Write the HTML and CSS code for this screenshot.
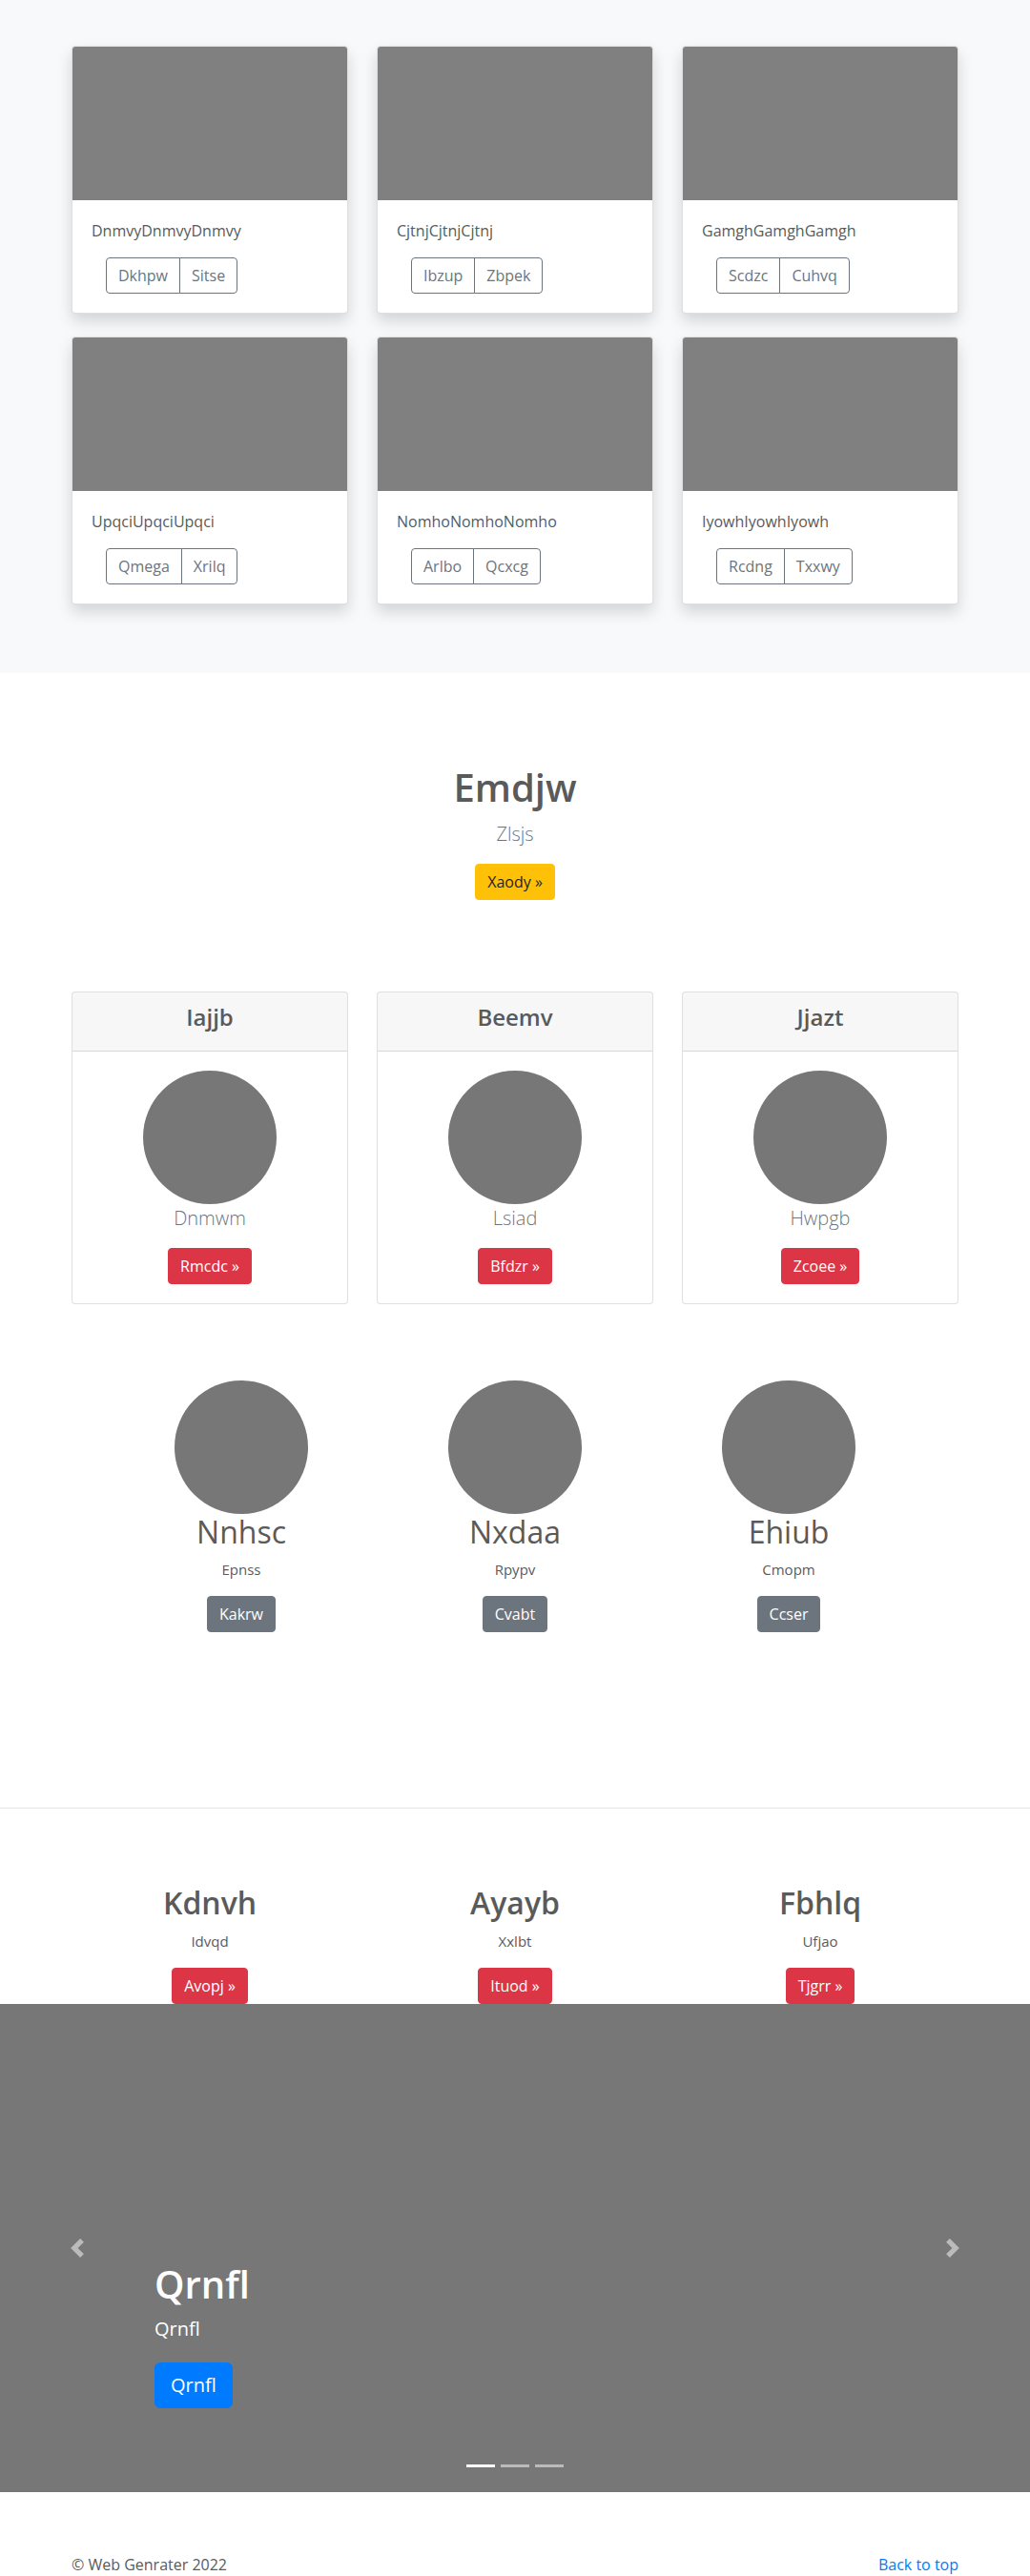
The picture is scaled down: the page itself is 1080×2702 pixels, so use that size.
FILE: index.html
```html
<!DOCTYPE html>
<html lang="en">
<head>
<meta charset="utf-8">
<title>Web Genrater</title>
<link rel="stylesheet" href="styles.css">
</head>
<body>
<section class="album">
  <div class="container">
    <div class="grid3 album-grid">
      <div class="acard">
        <div class="acard-img"></div>
        <div class="acard-body">
          <p class="acard-text">DnmvyDnmvyDnmvy</p>
          <div class="btn-group"><a class="btn btn-outline" href="#">Dkhpw</a><a class="btn btn-outline" href="#">Sitse</a></div>
        </div>
      </div>
      <div class="acard">
        <div class="acard-img"></div>
        <div class="acard-body">
          <p class="acard-text">CjtnjCjtnjCjtnj</p>
          <div class="btn-group"><a class="btn btn-outline" href="#">Ibzup</a><a class="btn btn-outline" href="#">Zbpek</a></div>
        </div>
      </div>
      <div class="acard">
        <div class="acard-img"></div>
        <div class="acard-body">
          <p class="acard-text">GamghGamghGamgh</p>
          <div class="btn-group"><a class="btn btn-outline" href="#">Scdzc</a><a class="btn btn-outline" href="#">Cuhvq</a></div>
        </div>
      </div>
      <div class="acard">
        <div class="acard-img"></div>
        <div class="acard-body">
          <p class="acard-text">UpqciUpqciUpqci</p>
          <div class="btn-group"><a class="btn btn-outline" href="#">Qmega</a><a class="btn btn-outline" href="#">Xrilq</a></div>
        </div>
      </div>
      <div class="acard">
        <div class="acard-img"></div>
        <div class="acard-body">
          <p class="acard-text">NomhoNomhoNomho</p>
          <div class="btn-group"><a class="btn btn-outline" href="#">Arlbo</a><a class="btn btn-outline" href="#">Qcxcg</a></div>
        </div>
      </div>
      <div class="acard">
        <div class="acard-img"></div>
        <div class="acard-body">
          <p class="acard-text">IyowhIyowhIyowh</p>
          <div class="btn-group"><a class="btn btn-outline" href="#">Rcdng</a><a class="btn btn-outline" href="#">Txxwy</a></div>
        </div>
      </div>
    </div>
  </div>
</section>

<section class="jumbo">
  <h1 class="jumbo-title">Emdjw</h1>
  <p class="lead muted jumbo-lead">Zlsjs</p>
  <div class="actions"><a class="btn btn-warning" href="#">Xaody »</a></div>
</section>

<section class="container pricing">
  <div class="grid3">
    <div class="pcard">
      <div class="pcard-header"><h4 class="pcard-title">Iajjb</h4></div>
      <div class="pcard-body">
        <div class="circle"></div>
        <p class="lead muted pcard-lead">Dnmwm</p>
        <a class="btn btn-danger" href="#">Rmcdc »</a>
      </div>
    </div>
    <div class="pcard">
      <div class="pcard-header"><h4 class="pcard-title">Beemv</h4></div>
      <div class="pcard-body">
        <div class="circle"></div>
        <p class="lead muted pcard-lead">Lsiad</p>
        <a class="btn btn-danger" href="#">Bfdzr »</a>
      </div>
    </div>
    <div class="pcard">
      <div class="pcard-header"><h4 class="pcard-title">Jjazt</h4></div>
      <div class="pcard-body">
        <div class="circle"></div>
        <p class="lead muted pcard-lead">Hwpgb</p>
        <a class="btn btn-danger" href="#">Zcoee »</a>
      </div>
    </div>
  </div>
</section>

<section class="team">
  <div class="member">
    <div class="circle"></div>
    <h2 class="member-name">Nnhsc</h2>
    <p class="small-text">Epnss</p>
    <a class="btn btn-secondary" href="#">Kakrw</a>
  </div>
  <div class="member">
    <div class="circle"></div>
    <h2 class="member-name">Nxdaa</h2>
    <p class="small-text">Rpypv</p>
    <a class="btn btn-secondary" href="#">Cvabt</a>
  </div>
  <div class="member">
    <div class="circle"></div>
    <h2 class="member-name">Ehiub</h2>
    <p class="small-text">Cmopm</p>
    <a class="btn btn-secondary" href="#">Ccser</a>
  </div>
</section>

<hr class="divider">

<section class="container features">
  <div class="grid3">
    <div class="feature">
      <h2 class="feature-title">Kdnvh</h2>
      <p class="small-text">Idvqd</p>
      <a class="btn btn-danger" href="#">Avopj »</a>
    </div>
    <div class="feature">
      <h2 class="feature-title">Ayayb</h2>
      <p class="small-text">Xxlbt</p>
      <a class="btn btn-danger" href="#">Ituod »</a>
    </div>
    <div class="feature">
      <h2 class="feature-title">Fbhlq</h2>
      <p class="small-text">Ufjao</p>
      <a class="btn btn-danger" href="#">Tjgrr »</a>
    </div>
  </div>
</section>

<div class="carousel">
  <ol class="indicators">
    <li class="active"></li>
    <li></li>
    <li></li>
  </ol>
  <div class="carousel-caption">
    <h1 class="caption-title">Qrnfl</h1>
    <p class="caption-text">Qrnfl</p>
    <div class="caption-actions"><a class="btn btn-lg btn-primary" href="#">Qrnfl</a></div>
  </div>
  <a class="control control-prev" href="#">
    <svg width="20" height="20" viewBox="0 0 8 8" fill="#fff"><path d="M5.25 0l-4 4 4 4 1.5-1.5L4.25 4l2.5-2.5L5.25 0z"/></svg>
  </a>
  <a class="control control-next" href="#">
    <svg width="20" height="20" viewBox="0 0 8 8" fill="#fff"><path d="M2.75 0l-1.5 1.5L3.75 4l-2.5 2.5L2.75 8l4-4-4-4z"/></svg>
  </a>
</div>

<footer class="container footer">
  <p>© Web Genrater 2022</p>
  <p><a class="top-link" href="#">Back to top</a></p>
</footer>
</body>
</html>
```

FILE: styles.css
```css
* { box-sizing: border-box; }
html, body { margin: 0; padding: 0; }
body {
  font-family: "Open Sans", "Noto Sans", "Liberation Sans", sans-serif;
  font-size: 16px;
  line-height: 1.5;
  color: #5a5a5a;
  background: #fff;
}
h1, h2, h4, p { margin: 0; }

.container { width: 960px; margin: 0 auto; padding: 0 15px; }
.grid3 { display: grid; grid-template-columns: repeat(3, 1fr); column-gap: 30px; }

/* buttons */
.btn {
  display: inline-block;
  padding: 6px 12px;
  font-size: 16px;
  line-height: 24px;
  border: 1px solid transparent;
  border-radius: 4px;
  text-decoration: none;
  font-weight: 400;
  white-space: nowrap;
}
.btn-outline { color: #6c757d; border-color: #6c757d; background: transparent; }
.btn-warning { background: #ffc107; border-color: #ffc107; color: #212529; }
.btn-danger { background: #dc3545; border-color: #dc3545; color: #fff; }
.btn-secondary { background: #6c757d; border-color: #6c757d; color: #fff; }
.btn-primary { background: #007bff; border-color: #007bff; color: #fff; }
.btn-lg { padding: 8px 16px; font-size: 20px; line-height: 30px; border-radius: 6px; }

.btn-group { display: inline-flex; margin-left: 15px; }
.btn-group .btn:first-child { border-top-right-radius: 0; border-bottom-right-radius: 0; }
.btn-group .btn + .btn { margin-left: -1px; border-top-left-radius: 0; border-bottom-left-radius: 0; }

.lead { font-size: 20px; line-height: 30px; font-weight: 300; }
.muted { color: #6c757d; }

/* album */
.album { background: #f8f9fa; padding: 48px 0 72px; }
.album-grid { row-gap: 24px; }
.acard {
  background: #fff;
  border: 1px solid rgba(0, 0, 0, .125);
  border-radius: 4px;
  box-shadow: 0 .5rem 1rem rgba(0, 0, 0, .15);
  overflow: hidden;
}
.acard-img { height: 161px; background: #808080; }
.acard-body { padding: 20px; }
.acard-text { margin-bottom: 16px; }

/* jumbotron */
.jumbo { text-align: center; padding: 96px 0 48px; }
.jumbo-title { font-size: 40px; line-height: 48px; font-weight: 600; margin-bottom: 10px; }
.jumbo-lead { margin-bottom: 16px; }
.actions { display: flex; justify-content: center; }

/* pricing */
.pricing { padding-top: 48px; }
.pcard {
  border: 1px solid rgba(0, 0, 0, .125);
  border-radius: 4px;
  text-align: center;
  background: #fff;
  overflow: hidden;
}
.pcard-header {
  background: rgba(0, 0, 0, .03);
  border-bottom: 1px solid rgba(0, 0, 0, .125);
  padding: 12px 20px;
}
.pcard-title { font-size: 24px; line-height: 28.8px; font-weight: 600; margin-bottom: 8px; }
.pcard-body { padding: 20px; display: flex; flex-direction: column; align-items: center; }
.circle { width: 140px; height: 140px; border-radius: 50%; background: #777; flex: none; }
.pcard-lead { margin-bottom: 16px; }

/* team */
.team {
  width: 861px;
  margin: 80px auto 0;
  display: grid;
  grid-template-columns: repeat(3, 1fr);
}
.member { display: flex; flex-direction: column; align-items: center; text-align: center; }
.member-name { font-size: 32px; line-height: 38.4px; font-weight: 400; margin-bottom: 8px; }
.small-text { font-size: 15px; line-height: 24px; margin-bottom: 16px; }

.divider { border: 0; border-top: 1px solid #e5e5e5; margin: 184px 0 80px; height: 0; }

/* features */
.feature { display: flex; flex-direction: column; align-items: center; text-align: center; }
.feature-title { font-size: 32px; line-height: 38.4px; font-weight: 600; margin-bottom: 8px; }

/* carousel */
.carousel { position: relative; height: 512px; background: #777; overflow: hidden; }
.carousel-caption {
  position: absolute;
  left: 15%;
  right: 15%;
  bottom: 48px;
  padding: 20px 0;
  color: #fff;
  z-index: 10;
}
.caption-title { font-size: 40px; line-height: 48px; font-weight: 600; margin-bottom: 8px; }
.caption-text { font-size: 20px; line-height: 30px; margin-bottom: 20px; }
.caption-actions { display: flex; margin-bottom: 20px; }

.control {
  position: absolute;
  top: 0;
  bottom: 0;
  width: 15%;
  display: flex;
  align-items: center;
  justify-content: center;
  opacity: .5;
}
.control-prev { left: 0; }
.control-next { right: 0; }

.indicators {
  position: absolute;
  left: 15%;
  right: 15%;
  bottom: 0;
  margin: 0 0 16px;
  padding: 0;
  list-style: none;
  display: flex;
  justify-content: center;
  z-index: 15;
}
.indicators li {
  box-sizing: content-box;
  width: 30px;
  height: 3px;
  margin: 0 3px;
  background: #fff;
  background-clip: padding-box;
  border-top: 10px solid transparent;
  border-bottom: 10px solid transparent;
  opacity: .5;
}
.indicators li.active { opacity: 1; }

/* footer */
.footer { padding-top: 64px; display: flex; justify-content: space-between; }
.footer p { line-height: 24px; margin: 0; }
.top-link { color: #007bff; text-decoration: none; }
```
